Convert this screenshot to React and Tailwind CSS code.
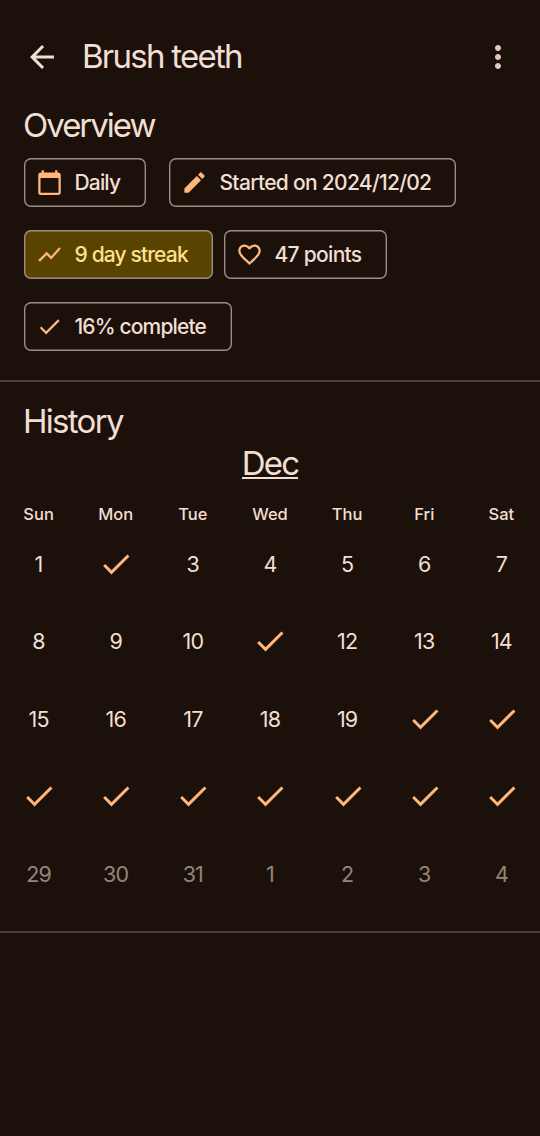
import React from "react";

const ICONS = {
  back: "M20 11H7.83l5.59-5.59L12 4l-8 8 8 8 1.41-1.41L7.83 13H20v-2z",
  more: "M12 8c1.1 0 2-.9 2-2s-.9-2-2-2-2 .9-2 2 .9 2 2 2zm0 2c-1.1 0-2 .9-2 2s.9 2 2 2 2-.9 2-2-.9-2-2-2zm0 6c-1.1 0-2 .9-2 2s.9 2 2 2 2-.9 2-2-.9-2-2-2z",
  calendar: "M20 3h-1V1h-2v2H7V1H5v2H4c-1.1 0-2 .9-2 2v16c0 1.1.9 2 2 2h16c1.1 0 2-.9 2-2V5c0-1.1-.9-2-2-2zm0 18H4V8h16v13z",
  edit: "M3 17.25V21h3.75L17.81 9.94l-3.75-3.75L3 17.25zM20.71 7.04c.39-.39.39-1.02 0-1.41l-2.34-2.34c-.39-.39-1.02-.39-1.41 0l-1.83 1.83 3.75 3.75 1.83-1.83z",
  chart: "M3.5 18.49l6-6.01 4 4L22 6.92l-1.41-1.41-7.09 7.97-4-4L2 16.99z",
  heart: "M16.5 3c-1.74 0-3.41.81-4.5 2.09C10.91 3.81 9.24 3 7.5 3 4.42 3 2 5.42 2 8.5c0 3.78 3.4 6.86 8.55 11.54L12 21.35l1.45-1.32C18.6 15.36 22 12.28 22 8.5 22 5.42 19.58 3 16.5 3zm-4.4 15.55l-.1.1-.1-.1C7.14 14.24 4 11.39 4 8.5 4 6.5 5.5 5 7.5 5c1.54 0 3.04.99 3.57 2.36h1.87C13.46 5.99 14.96 5 16.5 5c2 0 3.5 1.5 3.5 3.5 0 2.89-3.14 5.74-7.9 10.05z",
  check: "M9 16.17L4.83 12l-1.42 1.41L9 19 21 7l-1.41-1.41z",
};

function Icon({ name, className }) {
  return (
    <svg viewBox="0 0 24 24" fill="currentColor" className={"shrink-0 " + className} aria-hidden="true">
      <path d={ICONS[name]} />
    </svg>
  );
}

function Chip({ icon, label, className, textClass = "" }) {
  return (
    <div className={"flex h-[49px] items-center rounded-[7px] inset-ring-[1.4px] inset-ring-[#9d8d81] pl-3 " + className}>
      <Icon name={icon} className="size-[27px] text-[#ffb77c]" />
      <span className={"ml-[11.5px] whitespace-nowrap text-[21px] font-medium leading-[30px] " + textClass}>{label}</span>
    </div>
  );
}

const DAYS = ["Sun", "Mon", "Tue", "Wed", "Thu", "Fri", "Sat"];
const WEEKS = [
  [1, "x", 3, 4, 5, 6, 7],
  [8, 9, 10, "x", 12, 13, 14],
  [15, 16, 17, 18, 19, "x", "x"],
  ["x", "x", "x", "x", "x", "x", "x"],
  [29, 30, 31, 1, 2, 3, 4],
];

export default function App() {
  return (
    <main className="flex h-[1136px] w-[540px] flex-col overflow-hidden bg-[#1c110a] font-['Inter',sans-serif] text-[#f2dfd3]">
      <header className="flex h-[106px] items-center pt-[7px] pr-6 pl-6">
        <Icon name="back" className="size-9" />
        <h1 className="ml-[22px] flex-1 pb-px text-[33px] font-normal leading-10 tracking-[-1.75px]">Brush teeth</h1>
        <Icon name="more" className="size-9 text-[#e2c9bb]" />
      </header>

      <section className="flex h-[274px] flex-col pl-6">
        <h2 className="-ml-px text-[33px] font-normal leading-[38px] tracking-[-2px]">Overview</h2>
        <div className="mt-[14px] flex gap-6">
          <Chip icon="calendar" label="Daily" className="w-[122px]" textClass="tracking-[-0.85px]" />
          <Chip icon="edit" label="Started on 2024/12/02" className="-ml-px w-[287px]" textClass="tracking-[-0.7px]" />
        </div>
        <div className="mt-[23px] flex gap-3">
          <Chip icon="chart" label="9 day streak" className="w-[189px] bg-[#584400]" textClass="text-[#ffe08d] tracking-[-0.85px]" />
          <Chip icon="heart" label="47 points" className="-ml-px w-[163px]" textClass="tracking-[-0.7px]" />
        </div>
        <div className="mt-[23px] flex">
          <Chip icon="check" label="16% complete" className="w-[208px]" textClass="tracking-[-0.85px]" />
        </div>
      </section>

      <section className="flex h-[553px] flex-col border-y-2 border-[#4b3d35]">
        <h2 className="mt-5 pl-[23px] text-[33px] font-normal leading-[38px] tracking-[-1.7px]">History</h2>
        <div className="mt-[4px] text-center text-[33px] font-normal leading-[38px] tracking-[-1.8px]">
          <span className="inline-block h-[35px] border-b-2 border-[#f2dfd3]">Dec</span>
        </div>
        <div className="mt-[20px] grid grid-cols-7">
          {DAYS.map((d) => (
            <span key={d} className="text-center text-[16.5px] font-medium leading-6">{d}</span>
          ))}
        </div>
        <div className="-mt-px grid grid-cols-7 auto-rows-[77.5px]">
          {WEEKS.flatMap((week, w) =>
            week.map((day, i) => (
              <div key={w + "-" + i} className={"flex items-center justify-center " + (w === 4 ? "text-[#94857a]" : "")}>
                {day === "x" ? (
                  <Icon name="check" className="ml-px size-9 text-[#ffb77c]" />
                ) : (
                  <span className="text-[21.5px] font-normal leading-6 tracking-[-0.8px]">{day}</span>
                )}
              </div>
            ))
          )}
        </div>
      </section>
    </main>
  );
}
